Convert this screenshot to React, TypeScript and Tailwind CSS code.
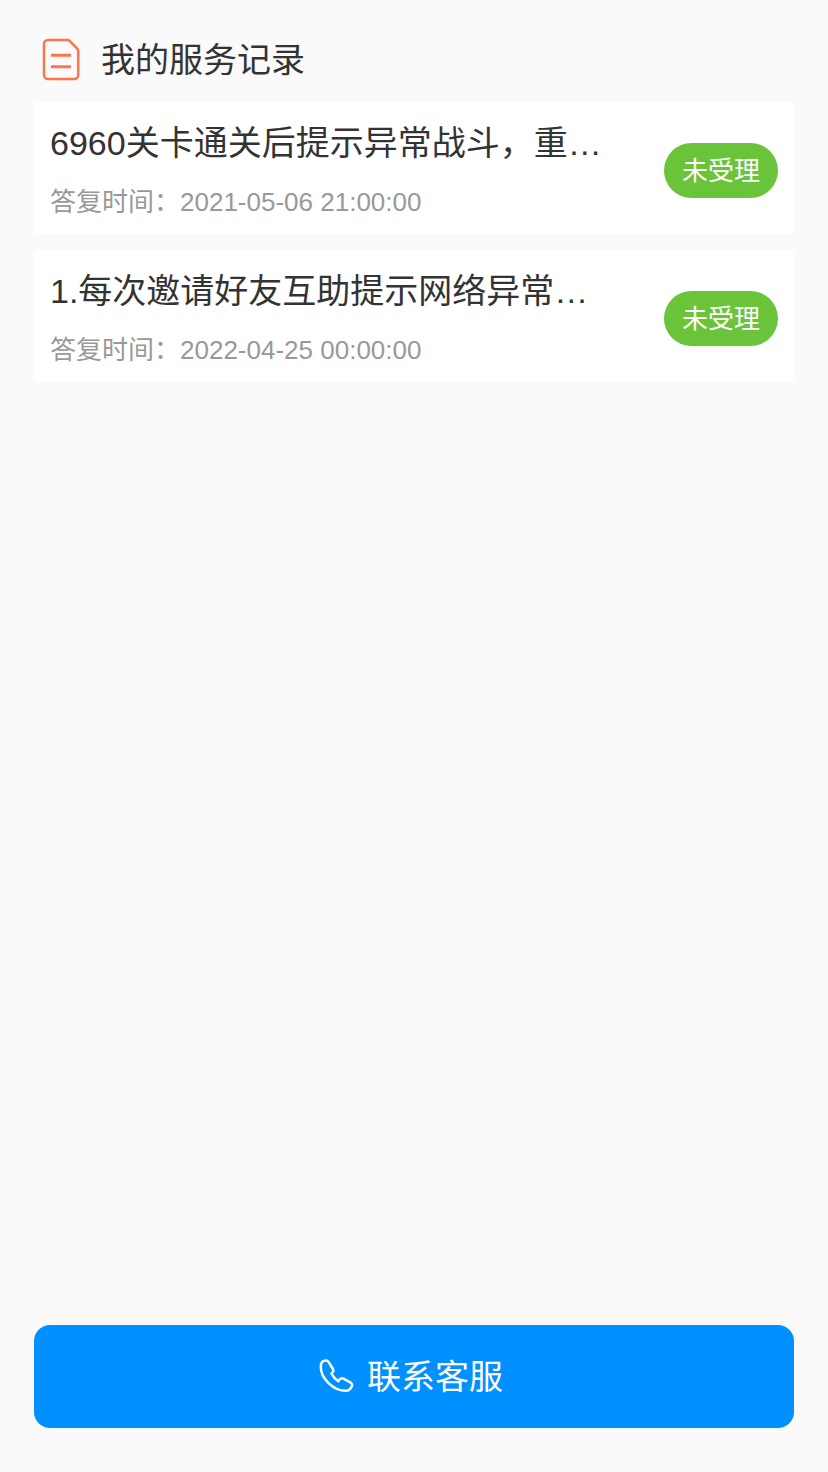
const fontStack = "font-['Liberation_Sans','Noto_Sans_CJK_SC',sans-serif]";

const records = [
  { title: "6960关卡通关后提示异常战斗，重新进入后仍然如此", time: "2021-05-06 21:00:00" },
  { title: "1.每次邀请好友互助提示网络异常，无法完成任务", time: "2022-04-25 00:00:00" },
];

function DocIcon() {
  return (
    <svg width="40" height="44" viewBox="0 0 40 44" fill="none" stroke="#ff7448" strokeWidth="2.5">
      <path d="M6 2h20a2 2 0 0 1 1.400.6l8.200 8.500a2 2 0 0 1 .6 1.400V37a4 4 0 0 1-4 4H6a4 4 0 0 1-4-4V6a4 4 0 0 1 4-4z" strokeLinejoin="round" />
      <path d="M9 17.300h20M9 28.700h20" strokeWidth="3" />
    </svg>
  );
}

function PhoneIcon() {
  return (
    <svg width="36" height="36" viewBox="0 0 36 36" fill="none" stroke="#ffffff" strokeWidth="2.500" strokeLinejoin="round">
      <path d="M1.800 8C1.800 4.500 3.500 2 6 1.600 7.500 1.300 9 2 9.800 3.300L14 10.200c.6 1.300.4 2.500-.7 3.500l-.8.8c1.500 3 4 6 6.700 7.700l1.400-1.700c1-1.200 2.300-1.600 3.800-.9l7.300 4.100c1.300.8 1.700 2.300 1 3.800-1.200 2.500-3.200 4.200-5.700 4.300C14 31.800 1.800 19 1.800 8z" />
    </svg>
  );
}

function RecordRow({ title, time }: { title: string; time: string }) {
  return (
    <div className="flex h-[132px] items-center justify-between rounded-[4px] bg-white px-4">
      <div className="flex flex-col self-stretch pt-[19px]">
        <div className="w-[552px] truncate text-[34px] leading-[44px] text-[#333333]">{title}</div>
        <div className="mt-[19px] text-[26px] leading-[36px] text-[#999999]">答复时间：{time}</div>
      </div>
      <div className="mt-[5px] flex h-[55px] w-[114px] items-center justify-center rounded-full bg-[#6ac43a] pt-[2px] text-[26px] text-white">
        未受理
      </div>
    </div>
  );
}

export default function App() {
  return (
    <div className={`${fontStack} flex h-[1472px] flex-col bg-[#fafafa] px-[34px] pb-[44px]`}>
      <div className="flex h-[102px] items-center gap-[19px] pl-2 pt-[18px]">
        <DocIcon />
        <span className="text-[34px] leading-[44px] text-[#333333]">我的服务记录</span>
      </div>
      <div className="flex flex-col gap-4">
        {records.map((r) => (
          <RecordRow key={r.time} title={r.title} time={r.time} />
        ))}
      </div>
      <button className="mt-auto flex h-[103px] items-center justify-center gap-3 rounded-[16px] bg-[#0090ff] pr-[6px] text-[34px] text-white">
        <PhoneIcon />
        <span className="mt-[2px]">联系客服</span>
      </button>
    </div>
  );
}
